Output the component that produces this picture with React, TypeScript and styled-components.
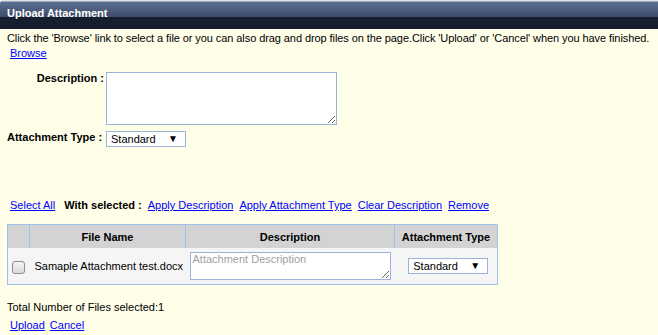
import styled, { createGlobalStyle } from "styled-components";
import React from "react";

const GlobalStyle = createGlobalStyle`
  html, body {
    margin: 0;
    padding: 0;
    background: #fffee9;
  }
  body {
    font-family: "Liberation Sans", Arial, sans-serif;
    font-size: 11px;
    color: #000;
  }
`;

const App = () => {
  return (
    <>
      <GlobalStyle />
      <Page>
        <Header>Upload Attachment</Header>
        <Body>
          <Intro>
            Click the 'Browse' link to select a file or you can also drag and drop files on the page.Click
            'Upload' or 'Cancel' when you have finished.
          </Intro>
          <BrowseRow>
            <Link href="#">Browse</Link>
          </BrowseRow>

          <FieldRow $top={11}>
            <FieldLabel $right $pad={0}>Description :</FieldLabel>
            <BigTextArea />
          </FieldRow>
          <FieldRow $top={6}>
            <FieldLabel $pad={0}>Attachment Type :</FieldLabel>
            <SelectBox $width={80}>
              <span>Standard</span>
              <Arrow>▼</Arrow>
            </SelectBox>
          </FieldRow>

          <Actions>
            <Link href="#">Select All</Link>
            <Bold>With selected :</Bold>
            <Link href="#">Apply Description</Link>
            <Link href="#">Apply Attachment Type</Link>
            <Link href="#">Clear Description</Link>
            <Link href="#">Remove</Link>
          </Actions>

          <Table>
            <colgroup>
              <col style={{ width: 22 }} />
              <col style={{ width: 156 }} />
              <col style={{ width: 209 }} />
              <col />
            </colgroup>
            <thead>
              <tr>
                <Th />
                <Th>File Name</Th>
                <Th>Description</Th>
                <Th>Attachment Type</Th>
              </tr>
            </thead>
            <tbody>
              <tr>
                <Td $align="center">
                  <CheckBox />
                </Td>
                <Td>Samaple Attachment test.docx</Td>
                <Td $align="center">
                  <RowTextArea placeholder="Attachment Description" />
                </Td>
                <Td $align="center">
                  <SelectBox $width={80}>
                    <span>Standard</span>
                    <Arrow>▼</Arrow>
                  </SelectBox>
                </Td>
              </tr>
            </tbody>
          </Table>

          <Total>Total Number of Files selected:1</Total>
          <Footer>
            <Link href="#">Upload</Link>
            <Link href="#">Cancel</Link>
          </Footer>
        </Body>
      </Page>
    </>
  );
};

export default App;

const Page = styled.div`
  width: 658px;
  height: 335px;
  overflow: hidden;
  background: #fffee9;
`;

const Header = styled.div`
  height: 29px;
  box-sizing: border-box;
  padding: 7px 0 0 7px;
  border-top-left-radius: 4px;
  background: linear-gradient(
    #e2e2e2 0px,
    #e2e2e2 1px,
    #5d7093 2px,
    #3b4b68 17px,
    #161f2e 17px,
    #141d2b 29px
  );
  color: #fff;
  font-weight: bold;
  font-size: 11px;
  line-height: 13px;
`;

const Body = styled.div`
  padding: 2px 0 0 7px;
`;

const Intro = styled.div`
  line-height: 15px;
  white-space: nowrap;
  letter-spacing: -0.08px;
`;

const BrowseRow = styled.div`
  padding-left: 3px;
  line-height: 15px;
`;

const Link = styled.a`
  color: #0000ff;
  text-decoration: underline;
  font-size: 11px;
`;

const FieldRow = styled.div<{ $top: number }>`
  display: flex;
  align-items: flex-start;
  gap: 2px;
  margin-top: ${(p) => p.$top}px;
`;

const FieldLabel = styled.div<{ $right?: boolean; $pad?: number }>`
  width: 97px;
  text-align: ${(p) => (p.$right ? "right" : "left")};
  font-weight: bold;
  padding-top: ${(p) => p.$pad ?? 0}px;
  line-height: 12px;
  white-space: nowrap;
`;

const BigTextArea = styled.textarea`
  box-sizing: border-box;
  width: 231px;
  height: 53px;
  border: 1px solid #9bb3d8;
  background: #fff;
  resize: both;
  outline: none;
  margin: 0;
`;

const SelectBox = styled.div<{ $width: number }>`
  box-sizing: border-box;
  width: ${(p) => p.$width}px;
  height: 16px;
  display: inline-flex;
  align-items: center;
  justify-content: space-between;
  padding: 0 7px 0 4px;
  border: 1px solid #9bb3d8;
  background: #fff;
  font-size: 11px;
  line-height: 14px;
  text-align: left;
`;

const Arrow = styled.span`
  font-size: 10px;
`;

const Actions = styled.div`
  display: flex;
  align-items: baseline;
  gap: 6px;
  margin-top: 51px;
  padding-left: 3px;
  line-height: 15px;

  & > :nth-child(2) {
    margin-left: 3px;
  }
`;

const Bold = styled.span`
  font-weight: bold;
`;

const Table = styled.table`
  margin-top: 11px;
  width: 491px;
  table-layout: fixed;
  border-collapse: collapse;
  border: 1px solid #9fc0ea;
`;

const Th = styled.th`
  height: 23px;
  padding: 0;
  background: #d3d3d3;
  border-right: 1px solid #9fc0ea;
  font-weight: bold;
  text-align: center;
  white-space: nowrap;
  &:last-child {
    border-right: none;
  }
`;

const Td = styled.td<{ $align?: string }>`
  height: 36px;
  padding: 0 0 0 5px;
  background: #f5f5f5;
  text-align: ${(p) => p.$align ?? "left"};
  vertical-align: middle;
  white-space: nowrap;
  &:first-child {
    padding: 0;
  }
`;

const CheckBox = styled.span`
  display: inline-block;
  box-sizing: border-box;
  width: 13px;
  height: 13px;
  margin-top: 4px;
  border: 1px solid #8e8e8e;
  border-radius: 3px;
  background: linear-gradient(#f4f4f4, #dcdcdc);
`;

const RowTextArea = styled.textarea`
  display: block;
  box-sizing: border-box;
  width: 201px;
  height: 28px;
  margin: 0 0 0 -1px;
  border: 1px solid #9bb3d8;
  padding: 0 2px;
  background: #fff;
  outline: none;
  font-family: "Liberation Sans", Arial, sans-serif;
  font-size: 11px;
  &::placeholder {
    color: #a0a0a0;
  }
`;

const Total = styled.div`
  margin-top: 15px;
  line-height: 15px;
`;

const Footer = styled.div`
  display: flex;
  gap: 5px;
  padding-left: 3px;
  margin-top: 3px;
  line-height: 15px;
`;
